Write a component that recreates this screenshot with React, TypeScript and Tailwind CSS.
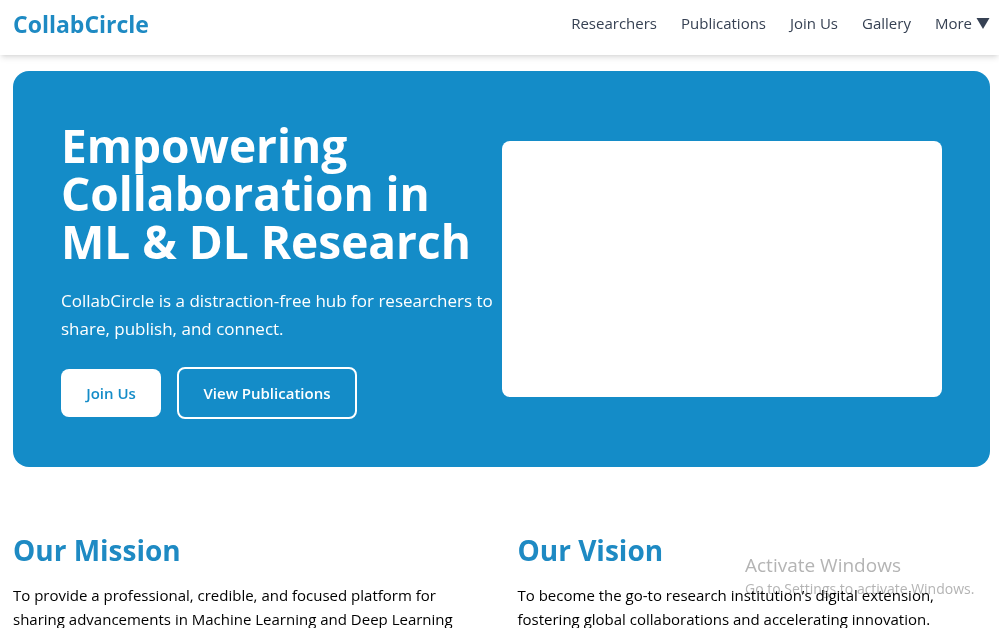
const links = ["Researchers", "Publications", "Join Us", "Gallery"];

const sections = [
  {
    title: "Our Mission",
    body: "To provide a professional, credible, and focused platform for sharing advancements in Machine Learning and Deep Learning",
  },
  {
    title: "Our Vision",
    body: "To become the go-to research institution’s digital extension, fostering global collaborations and accelerating innovation.",
  },
];

function Header() {
  return (
    <header className="bg-white shadow-md">
      <nav className="flex items-start justify-between pt-2 pr-[9px] pb-[15px] pl-[13px]">
        <a href="#home" className="text-[23px] leading-8 font-bold text-[#1e8ac3]">
          CollabCircle
        </a>
        <div className="flex gap-6 pt-[3px] text-[15px] leading-6 text-gray-700">
          {links.map((label) => (
            <a key={label} href={`#${label}`}>
              {label}
            </a>
          ))}
          <button type="button" className="flex items-center gap-1">
            More
            <svg aria-hidden="true" viewBox="0 0 14 12" className="h-3 w-[14px] fill-current">
              <path d="M0.5 1h13L7 12z" />
            </svg>
          </button>
        </div>
      </nav>
    </header>
  );
}

function Hero() {
  return (
    <section className="grid grid-cols-2 items-center rounded-2xl bg-[#148cc8] p-12 text-white">
      <div>
        <h1 className="mb-[22px] pt-[2px] text-[46px] leading-[48px] font-bold whitespace-nowrap">
          Empowering
          <br />
          Collaboration in
          <br />
          ML &amp; DL Research
        </h1>
        <p className="mb-6 text-[17px] leading-7 whitespace-nowrap">
          CollabCircle is a distraction-free hub for researchers to
          <br />
          share, publish, and connect.
        </p>
        <div className="flex items-center gap-4">
          <button type="button" className="w-25 rounded-lg bg-white py-3 text-[15px] leading-6 font-semibold text-[#148cc8]">
            Join Us
          </button>
          <button type="button" className="w-45 rounded-lg border-2 border-white py-3 text-[15px] leading-6 font-semibold">
            View Publications
          </button>
        </div>
      </div>
      <div className="h-64 rounded-lg bg-white" />
    </section>
  );
}

export default function App() {
  return (
    <div className="relative h-screen overflow-hidden bg-white font-['Open_Sans','Noto_Sans',sans-serif] text-black">
      <Header />
      <main className="pt-4 pr-[9px] pl-[13px]">
        <Hero />
        <div className="mt-[65px] grid grid-cols-2 gap-8">
          {sections.map((section) => (
            <section key={section.title}>
              <h2 className="mb-[15px] text-[28px] leading-9 font-bold text-[#1e8ac3]">{section.title}</h2>
              <p className="text-[15px] leading-6">{section.body}</p>
            </section>
          ))}
        </div>
      </main>
      <aside className="pointer-events-none absolute right-[18px] bottom-[29px] w-[236px] whitespace-nowrap text-[#b4b4b4] mix-blend-multiply">
        <p className="text-[19px] leading-7">Activate Windows</p>
        <p className="text-[14px] leading-5">Go to Settings to activate Windows.</p>
      </aside>
    </div>
  );
}
